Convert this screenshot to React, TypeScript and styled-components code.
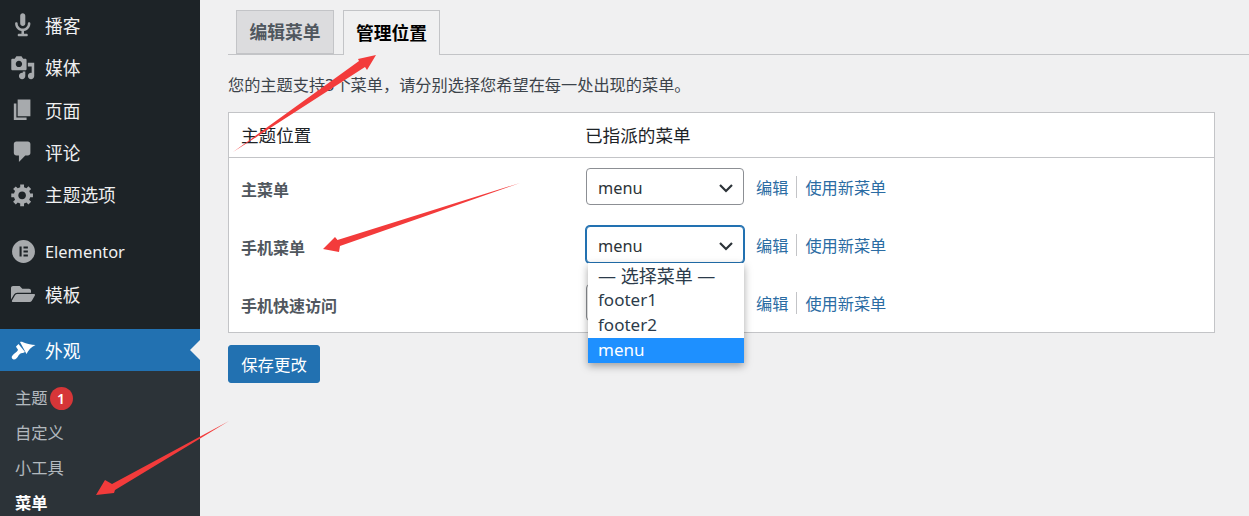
import React from "react";
import styled, { createGlobalStyle } from "styled-components";
import { FaFolderOpen } from "react-icons/fa";

const Global = createGlobalStyle`
  html, body { margin: 0; padding: 0; background: #f0f0f1; }
  body { font-family: "Noto Sans", "Noto Sans CJK SC", sans-serif; color: #3c434a; }
`;

const Page = styled.div`
  position: relative;
  display: flex;
  width: 1249px;
  height: 516px;
  overflow: hidden;
`;

const Sidebar = styled.nav`
  width: 200px;
  flex: none;
  display: flex;
  flex-direction: column;
  background: #1d2327;
  padding-top: 4px;
  box-sizing: border-box;
`;

const MenuItem = styled.div<{ $active?: boolean; $gap?: number }>`
  position: relative;
  height: 42.3px;
  flex: none;
  display: flex;
  align-items: center;
  gap: 9px;
  padding-left: 10px;
  margin-top: ${(p) => p.$gap ?? 0}px;
  font-size: 17.7px;
  color: ${(p) => (p.$active ? "#fff" : "#f0f0f1")};
  background: ${(p) => (p.$active ? "#2271b1" : "transparent")};
`;

const LatinLabel = styled.span`
  font-size: 16.4px;
`;

const IconBox = styled.span<{ $active?: boolean }>`
  width: 26px;
  height: 26px;
  flex: none;
  display: flex;
  align-items: center;
  justify-content: center;
  color: ${(p) => (p.$active ? "#fff" : "#a7aaad")};
`;

const ActivePointer = styled.span`
  position: absolute;
  right: 0;
  top: 11px;
  width: 0;
  height: 0;
  border-style: solid;
  border-width: 10px 10px 10px 0;
  border-color: transparent #f0f0f1 transparent transparent;
`;

const SubMenu = styled.div`
  flex: 1;
  display: flex;
  flex-direction: column;
  background: #2c3338;
  padding-top: 8.5px;
`;

const SubItem = styled.div<{ $current?: boolean }>`
  height: 34.8px;
  flex: none;
  display: flex;
  align-items: center;
  padding-left: 15px;
  font-size: 16.3px;
  font-weight: ${(p) => (p.$current ? 700 : 400)};
  color: ${(p) => (p.$current ? "#fff" : "rgba(240,246,252,.7)")};
`;

const Badge = styled.span`
  width: 23px;
  height: 23px;
  margin-left: 2px;
  margin-top: 2px;
  border-radius: 50%;
  background: #d63638;
  color: #fff;
  font-size: 14px;
  font-weight: 600;
  display: flex;
  align-items: center;
  justify-content: center;
`;

const Main = styled.main`
  flex: 1;
  min-width: 0;
  padding: 10px 34px 0 28px;
  background: #f0f0f1;
`;

const TabBar = styled.div`
  display: flex;
  gap: 9px;
  height: 45px;
  box-sizing: border-box;
  padding-left: 8px;
  margin-right: -34px;
  border-bottom: 1px solid #c3c4c7;
`;

const Tab = styled.div<{ $active?: boolean }>`
  width: ${(p) => (p.$active ? 97 : 98)}px;
  height: ${(p) => (p.$active ? 45 : 44)}px;
  box-sizing: border-box;
  padding-bottom: 2px;
  border: 1px solid #c3c4c7;
  border-bottom: ${(p) => (p.$active ? "none" : "1px solid #c3c4c7")};
  background: ${(p) => (p.$active ? "#f0f0f1" : "#dcdcde")};
  color: ${(p) => (p.$active ? "#000" : "#50575e")};
  font-size: 17.8px;
  font-weight: 700;
  display: flex;
  align-items: center;
  justify-content: center;
`;

const Description = styled.p`
  margin: 19px 0 0;
  font-size: 16.2px;
  line-height: 22px;
  height: 22px;
  color: #3c434a;
  white-space: nowrap;
`;

const Table = styled.div`
  margin-top: 16px;
  box-sizing: border-box;
  height: 221px;
  width: 987px;
  border: 1px solid #c3c4c7;
  background: #fff;
`;

const HeadRow = styled.div`
  display: grid;
  grid-template-columns: 356px 1fr;
  height: 45px;
  box-sizing: border-box;
  padding-bottom: 2px;
  border-bottom: 1px solid #c3c4c7;
  align-items: center;
  font-size: 17.6px;
  color: #1d2327;
`;

const HeadCell = styled.div<{ $first?: boolean }>`
  padding-left: ${(p) => (p.$first ? 12 : 0)}px;
`;

const Row = styled.div`
  display: grid;
  grid-template-columns: 357px 1fr;
  height: 58px;
  box-sizing: border-box;
  padding-top: 10px;
`;

const RowLabel = styled.div`
  padding: 11px 0 0 12px;
  font-size: 16px;
  line-height: 22px;
  font-weight: 600;
  color: #50575e;
`;

const Controls = styled.div`
  display: flex;
  align-items: flex-start;
`;

const SelectWrap = styled.div`
  position: relative;
  width: 158px;
`;

const SelectBox = styled.div<{ $focus?: boolean }>`
  height: 37px;
  box-sizing: border-box;
  border: 1px solid ${(p) => (p.$focus ? "#2271b1" : "#8c8f94")};
  box-shadow: ${(p) => (p.$focus ? "0 0 0 1px #2271b1" : "none")};
  border-radius: 4px;
  background: #fff;
  display: flex;
  align-items: center;
  justify-content: space-between;
  padding: 2px 9px 0 11px;
  font-size: 16.3px;
  color: #2c3338;
`;

const Dropdown = styled.div`
  position: absolute;
  z-index: 2;
  top: 37px;
  left: 2px;
  width: 156px;
  height: 100px;
  box-sizing: border-box;
  background: #fff;
  box-shadow: 0 3px 8px rgba(0, 0, 0, 0.35);
  display: flex;
  flex-direction: column;
`;

const Option = styled.div<{ $selected?: boolean; $size?: number }>`
  height: 25px;
  flex: none;
  box-sizing: border-box;
  display: flex;
  align-items: center;
  padding: 0 0 2px 10px;
  font-size: ${(p) => p.$size ?? 17}px;
  white-space: nowrap;
  background: ${(p) => (p.$selected ? "#1e90ff" : "transparent")};
  color: ${(p) => (p.$selected ? "#fff" : "#2c3b4a")};
`;

const Links = styled.div`
  display: flex;
  align-items: center;
  height: 24px;
  margin: 7px 0 0 12px;
  font-size: 16.2px;
  color: #2b6ca3;
`;

const LinkSep = styled.span`
  width: 1px;
  height: 22px;
  margin: 0 8px;
  background: #c3c4c7;
`;

const SaveButton = styled.button`
  display: block;
  margin-top: 12px;
  width: 92px;
  height: 38px;
  padding: 0;
  border: 1px solid #2271b1;
  border-radius: 3px;
  background: #2271b1;
  color: #fff;
  font-family: inherit;
  font-size: 16.4px;
`;

const ArrowLayer = styled.svg`
  position: absolute;
  left: 0;
  top: 0;
  z-index: 3;
  pointer-events: none;
`;

const Dash = ({ d }: { d: string }) => (
  <svg width="25.5" height="25.5" viewBox="0 0 20 20" fill="currentColor">
    <path d={d} />
  </svg>
);

const icons = {
  mic: "M12 9V3c0-1.1-.89-2-2-2-1.12 0-2 .94-2 2v6c0 1.1.9 2 2 2 1.1 0 2-.9 2-2zm4 0c0 2.97-2.16 5.43-5 5.91V17h2c.56 0 1 .45 1 1s-.44 1-1 1H7c-.55 0-1-.45-1-1s.45-1 1-1h2v-2.09C6.17 14.43 4 11.97 4 9c0-.55.45-1 1-1 .56 0 1 .45 1 1 0 2.21 1.8 4 4 4 2.21 0 4-1.79 4-4 0-.55.45-1 1-1 .56 0 1 .45 1 1z",
  media: "M13 11V4c0-.55-.45-1-1-1h-1.67L9 1H5L3.67 3H2c-.55 0-1 .45-1 1v7c0 .55.45 1 1 1h10c.55 0 1-.45 1-1zM7 4.5c1.38 0 2.5 1.12 2.5 2.5S8.38 9.5 7 9.5 4.5 8.38 4.5 7 5.62 4.5 7 4.5zM14 6h5v10.5c0 1.38-1.12 2.5-2.5 2.5S14 17.88 14 16.5s1.12-2.5 2.5-2.5c.17 0 .34.02.5.05V9h-3V6zm-4 8.05V13h2v3.5c0 1.38-1.12 2.5-2.5 2.5S7 17.88 7 16.5 8.12 14 9.5 14c.17 0 .34.02.5.05z",
  page: "M6 15V2h10v13H6zm-1 1h8v2H3V5h2v11z",
  comment: "M5 2h9c1.1 0 2 .9 2 2v7c0 1.1-.9 2-2 2h-2l-5 5v-5H5c-1.1 0-2-.9-2-2V4c0-1.1.9-2 2-2z",
  gear: "M18 12h-2.18c-.17.7-.44 1.35-.81 1.93l1.54 1.54-2.1 2.1-1.54-1.54c-.58.36-1.23.63-1.91.79V19H8v-2.18c-.68-.16-1.33-.43-1.91-.79l-1.54 1.54-2.12-2.12 1.54-1.54c-.36-.58-.63-1.23-.79-1.91H1V9.03h2.17c.16-.7.44-1.35.8-1.94L2.43 5.55l2.1-2.1 1.54 1.54c.58-.37 1.24-.64 1.93-.81V2h3v2.18c.68.16 1.33.43 1.91.79l1.54-1.54 2.12 2.12-1.54 1.54c.36.59.64 1.24.8 1.94H18V12zm-8.5 1.5c1.66 0 3-1.34 3-3s-1.34-3-3-3-3 1.34-3 3 1.34 3 3 3z",
};

const BrushIcon = () => (
  <svg width="26" height="26" viewBox="0 0 26 26" fill="currentColor">
    <path d="M10 5c3-1 5 2.500 15.500 3-4.500 2-7 5-9 9z" />
    <path d="M8.500 7l6.500 8-2 1c-2-.5-3.500 1-4.500 2.500-1 2-3 4.500-5 4-2-1-2.300-2.500-1-4 1.500-2 4.500-3.500 5.500-5.500 0-1-2-2.500-2-3.500z" />
  </svg>
);

const ElementorIcon = () => (
  <svg width="25" height="25" viewBox="0 0 24 24" fill="currentColor">
    <path
      fillRule="evenodd"
      d="M12 1a11 11 0 1 0 0 22 11 11 0 0 0 0-22zM8.200 7.200h2v9.600h-2zM12 7.200h4.200v1.900H12zM12 11h4.200v1.900H12zM12 14.900h4.200v1.900H12z"
    />
  </svg>
);

const Chevron = () => (
  <svg width="16" height="16" viewBox="0 0 16 16" fill="none" stroke="#2c3338" strokeWidth="2.2">
    <path d="M2 5l6 6 6-6" />
  </svg>
);

const RowLinks = () => (
  <Links>
    <span>编辑</span>
    <LinkSep />
    <span>使用新菜单</span>
  </Links>
);

export default function App() {
  return (
    <Page>
      <Global />
      <Sidebar>
        <MenuItem><IconBox><Dash d={icons.mic} /></IconBox>播客</MenuItem>
        <MenuItem><IconBox><Dash d={icons.media} /></IconBox>媒体</MenuItem>
        <MenuItem><IconBox><Dash d={icons.page} /></IconBox>页面</MenuItem>
        <MenuItem><IconBox><Dash d={icons.comment} /></IconBox>评论</MenuItem>
        <MenuItem><IconBox><Dash d={icons.gear} /></IconBox>主题选项</MenuItem>
        <MenuItem $gap={15}><IconBox><ElementorIcon /></IconBox><LatinLabel>Elementor</LatinLabel></MenuItem>
        <MenuItem><IconBox><FaFolderOpen size={24} /></IconBox>模板</MenuItem>
        <MenuItem $active $gap={13.9}>
          <IconBox $active><BrushIcon /></IconBox>外观
          <ActivePointer />
        </MenuItem>
        <SubMenu>
          <SubItem>主题<Badge>1</Badge></SubItem>
          <SubItem>自定义</SubItem>
          <SubItem>小工具</SubItem>
          <SubItem $current>菜单</SubItem>
        </SubMenu>
      </Sidebar>
      <Main>
        <TabBar>
          <Tab>编辑菜单</Tab>
          <Tab $active>管理位置</Tab>
        </TabBar>
        <Description>您的主题支持3个菜单，请分别选择您希望在每一处出现的菜单。</Description>
        <Table>
          <HeadRow>
            <HeadCell $first>主题位置</HeadCell>
            <HeadCell>已指派的菜单</HeadCell>
          </HeadRow>
          <Row>
            <RowLabel>主菜单</RowLabel>
            <Controls>
              <SelectWrap><SelectBox>menu<Chevron /></SelectBox></SelectWrap>
              <RowLinks />
            </Controls>
          </Row>
          <Row>
            <RowLabel>手机菜单</RowLabel>
            <Controls>
              <SelectWrap>
                <SelectBox $focus>menu<Chevron /></SelectBox>
                <Dropdown>
                  <Option $size={18}>— 选择菜单 —</Option>
                  <Option>footer1</Option>
                  <Option>footer2</Option>
                  <Option $selected>menu</Option>
                </Dropdown>
              </SelectWrap>
              <RowLinks />
            </Controls>
          </Row>
          <Row>
            <RowLabel>手机快速访问</RowLabel>
            <Controls>
              <SelectWrap><SelectBox>menu<Chevron /></SelectBox></SelectWrap>
              <RowLinks />
            </Controls>
          </Row>
        </Table>
        <SaveButton>保存更改</SaveButton>
      </Main>
      <ArrowLayer width="1249" height="516" viewBox="0 0 1249 516">
        <polygon fill="#f33b3b" points="233,152 359,61 358,59 376,55 367,70 365,67" />
        <polygon fill="#f33b3b" points="520,183 337.5,240 335,237 323,249 339,252 340,246" />
        <polygon fill="#f33b3b" points="229,421 112,484 105,480 96,495 114,493 115,490" />
      </ArrowLayer>
    </Page>
  );
}
